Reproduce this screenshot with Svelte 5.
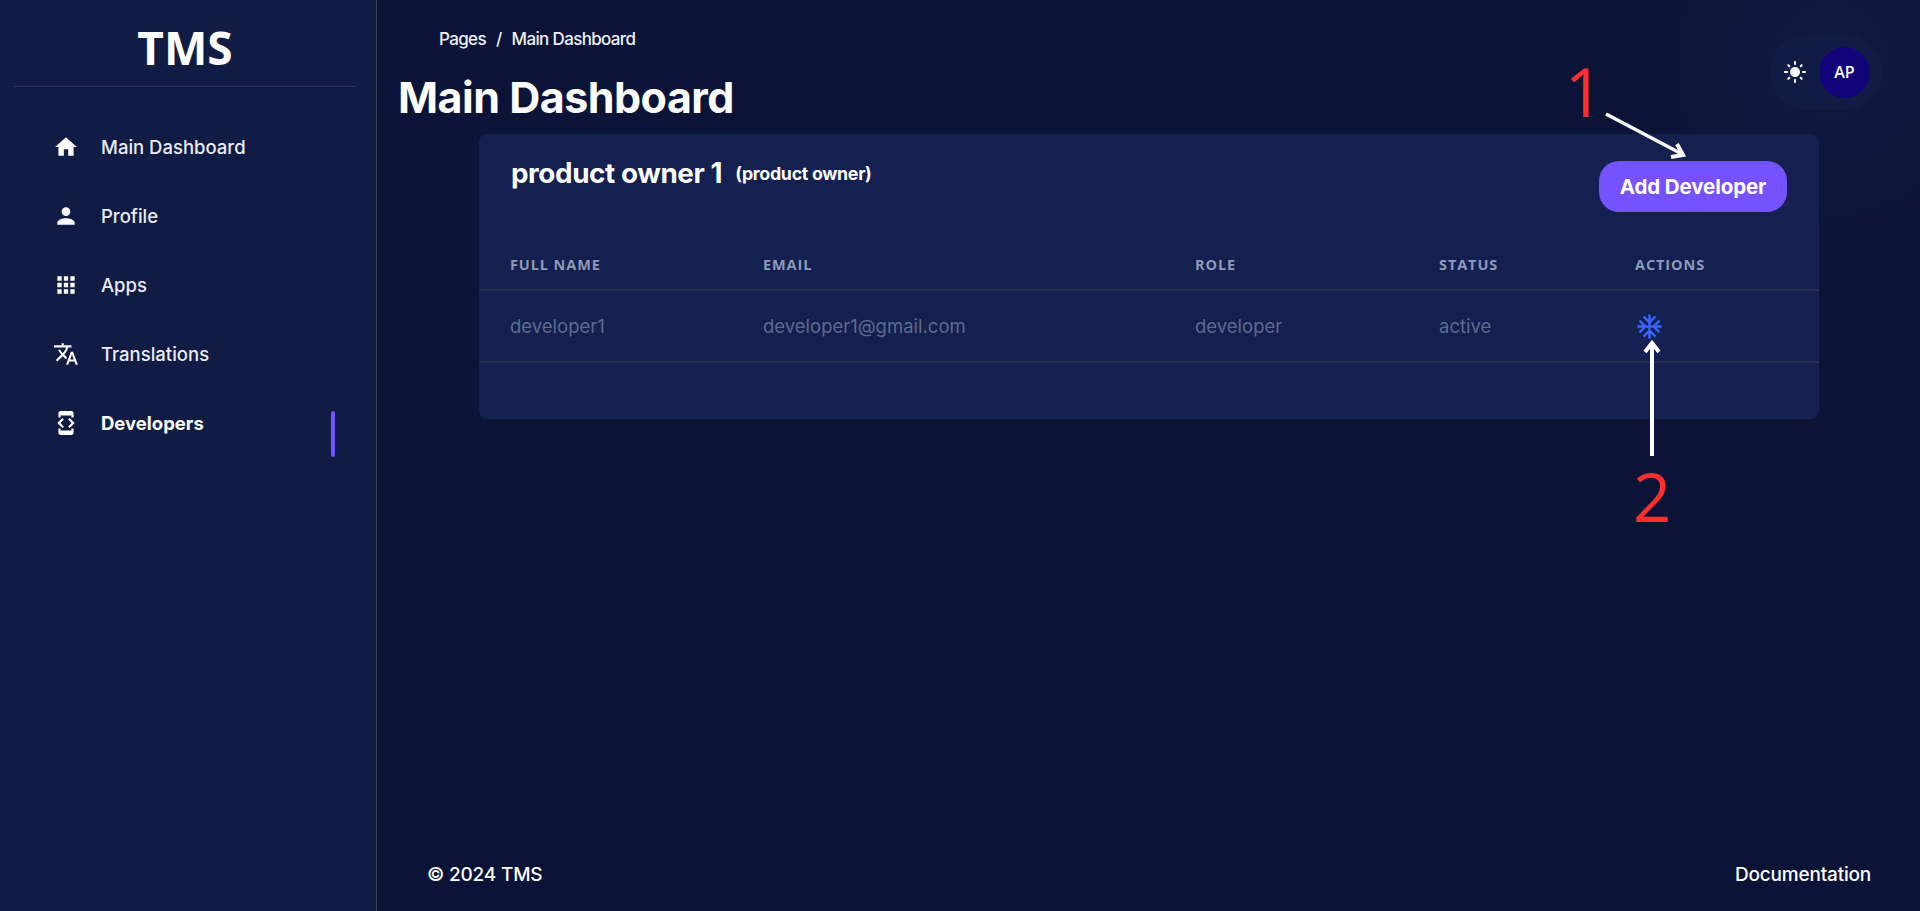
<script lang="ts">
  const navItems = [
    { label: "Main Dashboard", d: "M10 20v-6h4v6h5v-8h3L12 3 2 12h3v8z" },
    { label: "Profile", d: "M12 12c2.21 0 4-1.79 4-4s-1.79-4-4-4-4 1.79-4 4 1.79 4 4 4zm0 2c-2.67 0-8 1.34-8 4v2h16v-2c0-2.66-5.33-4-8-4z" },
    { label: "Apps", d: "M4 8h4V4H4v4zm6 12h4v-4h-4v4zm-6 0h4v-4H4v4zm0-6h4v-4H4v4zm6 0h4v-4h-4v4zm6-10v4h4V4h-4zm-6 4h4V4h-4v4zm6 6h4v-4h-4v4zm0 6h4v-4h-4v4z" },
    { label: "Translations", d: "M12.87 15.07l-2.54-2.51.03-.03c1.74-1.94 2.98-4.17 3.71-6.53H17V4h-7V2H8v2H1v1.99h11.17C11.5 7.92 10.44 9.75 9 11.35 8.07 10.32 7.3 9.19 6.69 8h-2c.73 1.63 1.73 3.17 2.98 4.56l-5.09 5.02L4 19l5-5 3.11 3.11.76-2.04zM18.5 10h-2L12 22h2l1.12-3h4.75L21 22h2l-4.5-12zm-2.62 7l1.62-4.33L19.12 17h-3.24z" },
    { label: "Developers", active: true, d: "M7 5h10v2h2V3c0-1.1-.9-1.99-2-1.99L7 1c-1.1 0-2 .9-2 2v4h2V5zm8.41 11.59L20 12l-4.59-4.59L14 8.83 17.17 12 14 15.17l1.41 1.42zM10 15.17L6.83 12 10 8.83 8.59 7.41 4 12l4.59 4.59L10 15.17zM17 19H7v-2H5v4c0 1.1.9 2 2 2h10c1.1 0 2-.9 2-2v-4h-2v2z" },
  ];

  const sun = "M12 7c-2.76 0-5 2.24-5 5s2.24 5 5 5 5-2.24 5-5-2.24-5-5-5zM2 13h2c.55 0 1-.45 1-1s-.45-1-1-1H2c-.55 0-1 .45-1 1s.45 1 1 1zm18 0h2c.55 0 1-.45 1-1s-.45-1-1-1h-2c-.55 0-1 .45-1 1s.45 1 1 1zM11 2v2c0 .55.45 1 1 1s1-.45 1-1V2c0-.55-.45-1-1-1s-1 .45-1 1zm0 18v2c0 .55.45 1 1 1s1-.45 1-1v-2c0-.55-.45-1-1-1s-1 .45-1 1zM5.99 4.58c-.39-.39-1.03-.39-1.41 0-.39.39-.39 1.03 0 1.41l1.06 1.06c.39.39 1.03.39 1.41 0s.39-1.03 0-1.41L5.99 4.58zm12.37 12.37c-.39-.39-1.03-.39-1.41 0-.39.39-.39 1.03 0 1.41l1.06 1.06c.39.39 1.03.39 1.41 0 .39-.39.39-1.03 0-1.41l-1.06-1.06zm1.06-10.96c.39-.39.39-1.03 0-1.41-.39-.39-1.03-.39-1.41 0l-1.06 1.06c-.39.39-.39 1.03 0 1.41s1.03.39 1.41 0l1.06-1.06zM7.05 18.36c.39-.39.39-1.03 0-1.41-.39-.39-1.03-.39-1.41 0l-1.06 1.06c-.39.39-.39 1.03 0 1.41s1.03.39 1.41 0l1.06-1.06z";
  const snow = "M22 11h-4.17l3.24-3.24-1.41-1.42L15 11h-2V9l4.66-4.66-1.42-1.41L13 6.17V2h-2v4.17L7.76 2.93 6.34 4.34 11 9v2H9L4.34 6.34 2.93 7.76 6.17 11H2v2h4.17l-3.24 3.24 1.41 1.42L9 13h2v2l-4.66 4.66 1.42 1.41L11 17.83V22h2v-4.17l3.24 3.24 1.42-1.41L13 15v-2h2l4.66 4.66 1.41-1.42L17.83 13H22v-2z";

  const columns = ["Full name", "Email", "Role", "Status", "Actions"];
  const developers = [{ name: "developer1", email: "developer1@gmail.com", role: "developer", status: "active" }];
</script>

<div class="layout">
  <aside class="sidebar">
    <div class="logo">TMS</div>
    <nav class="nav">
      {#each navItems as item}
        <div class="nav-item" class:active={item.active}>
          <svg class="nav-icon" viewBox="0 0 24 24" fill="currentColor"><path d={item.d} /></svg>
          <span>{item.label}</span>
          {#if item.active}<i class="active-bar"></i>{/if}
        </div>
      {/each}
    </nav>
  </aside>

  <main class="main">
    <header class="topbar">
      <div>
        <div class="crumbs"><span>Pages</span><span class="slash">/</span><span>Main Dashboard</span></div>
        <h1>Main Dashboard</h1>
      </div>
      <div class="pill">
        <svg class="sun" viewBox="0 0 24 24" fill="currentColor"><path d={sun} /></svg>
        <div class="avatar">AP</div>
      </div>
    </header>

    <section class="card">
      <div class="card-head">
        <div class="owner">
          <span class="owner-name">product owner 1</span>
          <span class="owner-role">(product owner)</span>
        </div>
        <button class="add-btn">Add Developer</button>
      </div>
      <table>
        <thead>
          <tr>
            {#each columns as col}<th>{col}</th>{/each}
          </tr>
        </thead>
        <tbody>
          {#each developers as dev}
            <tr>
              <td>{dev.name}</td>
              <td>{dev.email}</td>
              <td>{dev.role}</td>
              <td>{dev.status}</td>
              <td>
                <svg class="snow" viewBox="0 0 24 24" fill="currentColor"><path d={snow} /></svg>
              </td>
            </tr>
          {/each}
        </tbody>
      </table>
    </section>

    <footer class="footer">
      <span>© 2024 TMS</span>
      <span>Documentation</span>
    </footer>
  </main>

  <!-- annotations drawn over the screenshot -->
  <span class="mark mark-1">1</span>
  <span class="mark mark-2">2</span>
  <svg class="arrows" width="1920" height="911" fill="none" stroke="#fff" stroke-width="3.5">
    <path d="M1606 114 L1682 154" />
    <path d="M1677 144 L1683 155 L1671 157" stroke-width="4" />
    <path d="M1652 456 L1652 344" stroke-width="4" />
    <path d="M1645 352 L1652 343 L1659 352" stroke-width="4" />
  </svg>
</div>

<style>
  :global(body) {
    margin: 0;
    background: #0b1437;
  }

  .layout {
    position: relative;
    display: flex;
    height: 911px;
    overflow: hidden;
    color: #fff;
    font-family: Inter, "Noto Sans", sans-serif;
    background: radial-gradient(circle at 1830px 60px, #0f1a42 0, #0b1437 190px);
  }

  .sidebar {
    flex: 0 0 376px;
    background: #111c44;
    border-right: 1px solid #3c4158;
  }

  .logo {
    box-sizing: border-box;
    height: 87px;
    padding-top: 7px;
    margin: 0 20px 0 14px;
    border-bottom: 1px solid #2b3560;
    display: flex;
    align-items: center;
    justify-content: center;
    font-family: "Open Sans", sans-serif;
    font-size: 46px;
    font-weight: 700;
    line-height: 1;
  }

  .nav {
    padding-top: 25px;
  }

  .nav-item {
    position: relative;
    height: 69px;
    display: flex;
    align-items: center;
    padding-left: 53px;
    color: #e9ebf2;
    font-size: 18.5px;
    font-weight: 500;
  }

  .nav-item.active {
    color: #fff;
    font-weight: 700;
  }

  .nav-icon {
    width: 26px;
    height: 26px;
    margin-right: 22px;
    color: #fff;
  }

  .active-bar {
    position: absolute;
    left: 331px;
    top: 23px;
    width: 4px;
    height: 46px;
    border-radius: 3px;
    background: #7551ff;
  }

  .main {
    flex: 1;
    min-width: 0;
    display: flex;
    flex-direction: column;
    padding: 0 38px 0 21px;
  }

  .topbar {
    display: flex;
    justify-content: space-between;
    align-items: flex-start;
    height: 134px;
  }

  .crumbs {
    display: flex;
    gap: 10px;
    margin: 27px 0 0 41px;
    font-size: 17px;
    line-height: 24px;
    font-weight: 500;
    letter-spacing: -0.65px;
    color: #eef0f6;
  }

  h1 {
    margin: 21px 0 0;
    font-size: 43px;
    line-height: 50px;
    font-weight: 700;
    letter-spacing: -0.5px;
  }

  .pill {
    display: flex;
    align-items: center;
    justify-content: space-between;
    box-sizing: border-box;
    width: 112px;
    height: 76px;
    margin-top: 34px;
    padding: 0 12px 0 13px;
    border-radius: 38px;
    background: #111c44;
  }

  .sun {
    width: 24px;
    height: 24px;
  }

  .avatar {
    width: 51px;
    height: 51px;
    border-radius: 50%;
    background: #11047a;
    display: flex;
    align-items: center;
    justify-content: center;
    font-family: "Open Sans", sans-serif;
    font-size: 16px;
    font-weight: 600;
  }

  .card {
    box-sizing: border-box;
    width: 1340px;
    height: 285px;
    margin-left: 81px;
    border-radius: 8px;
    background: #132050;
    overflow: hidden;
  }

  .card-head {
    display: flex;
    justify-content: space-between;
    align-items: flex-start;
    height: 113px;
    padding: 0 32px;
  }

  .owner {
    display: flex;
    align-items: center;
    gap: 13px;
    margin-top: 22px;
  }

  .owner-name {
    font-size: 27.8px;
    line-height: 34px;
    font-weight: 700;
    letter-spacing: -0.4px;
  }

  .owner-role {
    font-size: 17.8px;
    font-weight: 700;
    letter-spacing: -0.3px;
  }

  .add-btn {
    width: 188px;
    height: 51px;
    margin-top: 27px;
    border: 0;
    border-radius: 20px;
    background: #7551ff;
    color: #fff;
    font-family: inherit;
    font-size: 20.5px;
    font-weight: 700;
    letter-spacing: -0.1px;
    padding: 0;
  }

  table {
    width: 100%;
    border-collapse: collapse;
    table-layout: fixed;
  }

  th {
    box-sizing: border-box;
    height: 43px;
    padding: 0 0 0 31px;
    text-align: left;
    vertical-align: top;
    font-family: "Open Sans", sans-serif;
    font-size: 14.5px;
    line-height: 36px;
    font-weight: 700;
    letter-spacing: 0.9px;
    text-transform: uppercase;
    color: #8d9ab8;
    border-bottom: 2px solid #242d50;
  }

  th:nth-child(1) { width: 253px; }
  th:nth-child(2) { width: 432px; }
  th:nth-child(3) { width: 244px; }
  th:nth-child(4) { width: 196px; }

  td {
    box-sizing: border-box;
    height: 72px;
    padding: 0 0 0 31px;
    font-size: 18.5px;
    color: #5d6b8f;
    border-bottom: 2px solid #242d50;
  }

  .snow {
    display: block;
    width: 29px;
    height: 29px;
    color: #3965ff;
  }

  .footer {
    display: flex;
    justify-content: space-between;
    margin-top: auto;
    padding: 0 11px 24px 29px;
    font-size: 19px;
    line-height: 24px;
    font-weight: 500;
    letter-spacing: -0.2px;
  }

  .mark {
    position: absolute;
    font-family: "Open Sans", sans-serif;
    font-size: 67px;
    line-height: 1;
    color: #ff2d2d;
  }

  .mark-1 { left: 1565px; top: 58px; }
  .mark-2 { left: 1633px; top: 463px; }

  .arrows {
    position: absolute;
    left: 0;
    top: 0;
    pointer-events: none;
  }
</style>
